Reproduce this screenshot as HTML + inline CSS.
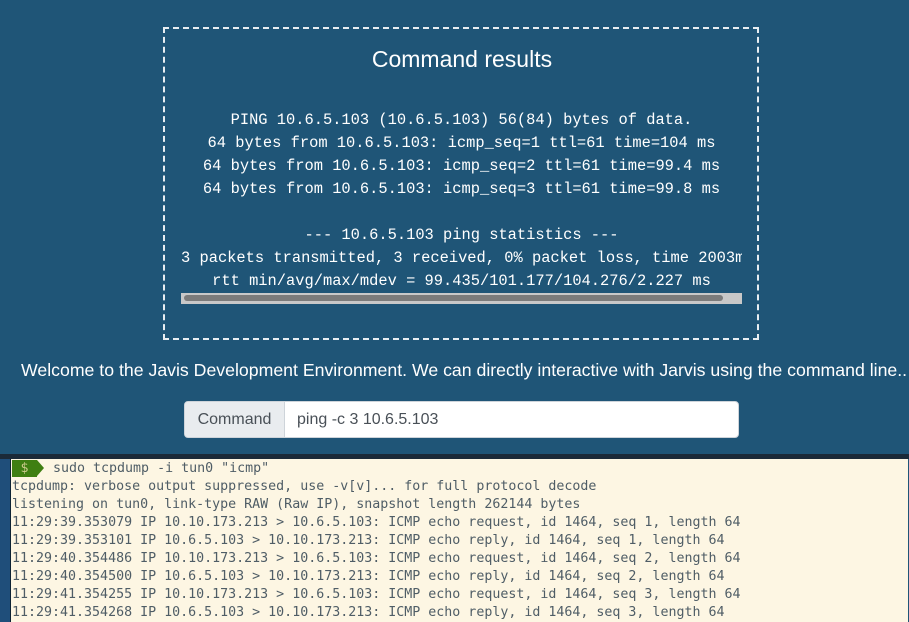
<!DOCTYPE html>
<html><head><style>
body{margin:0;width:909px;height:622px;overflow:hidden;background:#1f5577;position:relative;font-family:"Liberation Sans",sans-serif}
.box{position:absolute;left:163px;top:27px;width:596px;height:313px;border:2px dashed #e8eef2;box-sizing:border-box}
.title{position:absolute;left:163px;width:598px;top:46px;text-align:center;color:#fff;font-size:23px}
.pre{position:absolute;left:181px;width:561px;top:109px;overflow:hidden;white-space:pre;text-align:center;color:#fff;font-family:"Liberation Mono",monospace;font-size:15.4px;line-height:23px}
.sb{position:absolute;left:181px;top:293px;width:561px;height:11px;background:#c8c8c8}
.sb i{position:absolute;left:3px;top:2px;width:539px;height:6px;border-radius:3px;background:#7b7b7b}
.wel{position:absolute;left:21px;width:882px;top:360px;text-align:center;color:#fff;font-size:17.7px;white-space:nowrap}
.ig{position:absolute;left:184px;top:401px;width:555px;height:37px;border:1px solid #ced4da;border-radius:4px;box-sizing:border-box;background:#fff;overflow:hidden;font-size:16px}
.ig .a{position:absolute;left:0;top:0;width:99px;height:100%;background:#e9ecef;border-right:1px solid #ced4da;color:#495057;line-height:35px;text-align:center}
.ig .b{position:absolute;left:112px;top:0;line-height:35px;color:#495057}
.dk{position:absolute;left:0;top:454px;width:909px;height:5px;background:#1b2a38}
.side{position:absolute;left:0;top:459px;width:10px;height:163px;background:#1f4e7a;border-right:1px solid #0d2233}
.term{position:absolute;left:11px;top:459px;width:897px;height:163px;background:#fdf6e3;color:#4f5d66;font-family:"DejaVu Sans Mono",monospace;font-size:13.3px;line-height:18px;white-space:pre;padding-left:1px;padding-top:1px;box-sizing:border-box}
.pr{display:inline-block;background:#3f7f12;color:#c9c98a;width:25px;height:17px;text-align:center;position:relative;vertical-align:top;margin-right:16px}
.pr:after{content:"";position:absolute;right:-7px;top:0;border-left:7px solid #3f7f12;border-top:8.5px solid transparent;border-bottom:8.5px solid transparent}
</style></head><body>
<div class="box"></div>
<div class="title">Command results</div>
<div class="pre">PING 10.6.5.103 (10.6.5.103) 56(84) bytes of data.
64 bytes from 10.6.5.103: icmp_seq=1 ttl=61 time=104 ms
64 bytes from 10.6.5.103: icmp_seq=2 ttl=61 time=99.4 ms
64 bytes from 10.6.5.103: icmp_seq=3 ttl=61 time=99.8 ms

--- 10.6.5.103 ping statistics ---
<span style="display:block;text-align:left">3 packets transmitted, 3 received, 0% packet loss, time 2003ms</span>rtt min/avg/max/mdev = 99.435/101.177/104.276/2.227 ms</div>
<div class="sb"><i></i></div>
<div class="wel">Welcome to the Javis Development Environment. We can directly interactive with Jarvis using the command line..</div>
<div class="ig"><div class="a">Command</div><div class="b">ping -c 3 10.6.5.103</div></div>
<div class="dk"></div><div class="side"></div>
<div class="term"><span class="pr">$</span>sudo tcpdump -i tun0 "icmp"
tcpdump: verbose output suppressed, use -v[v]... for full protocol decode
listening on tun0, link-type RAW (Raw IP), snapshot length 262144 bytes
11:29:39.353079 IP 10.10.173.213 &gt; 10.6.5.103: ICMP echo request, id 1464, seq 1, length 64
11:29:39.353101 IP 10.6.5.103 &gt; 10.10.173.213: ICMP echo reply, id 1464, seq 1, length 64
11:29:40.354486 IP 10.10.173.213 &gt; 10.6.5.103: ICMP echo request, id 1464, seq 2, length 64
11:29:40.354500 IP 10.6.5.103 &gt; 10.10.173.213: ICMP echo reply, id 1464, seq 2, length 64
11:29:41.354255 IP 10.10.173.213 &gt; 10.6.5.103: ICMP echo request, id 1464, seq 3, length 64
11:29:41.354268 IP 10.6.5.103 &gt; 10.10.173.213: ICMP echo reply, id 1464, seq 3, length 64</div>
</body></html>
